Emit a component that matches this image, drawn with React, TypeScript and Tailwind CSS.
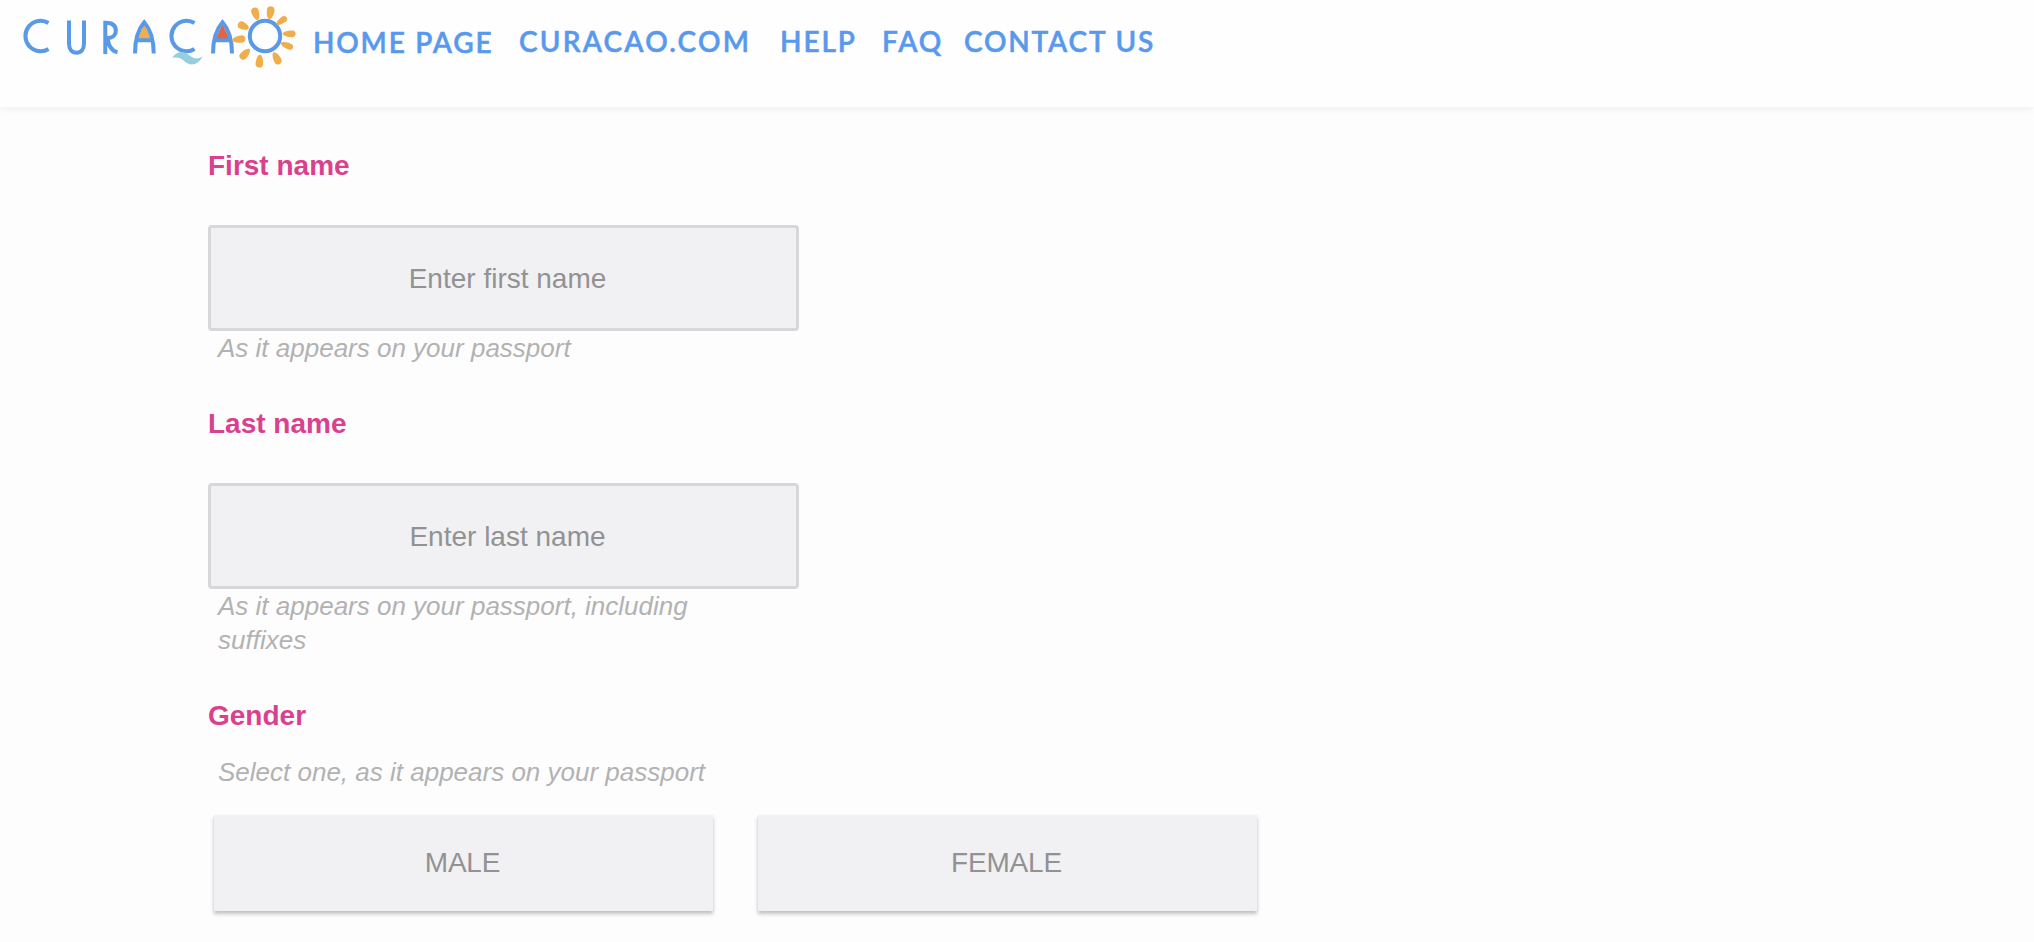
interface FieldProps {
  label: string;
  placeholder: string;
  hint: string;
}

const links = [
  { label: 'HOME PAGE', className: 'ml-[17px] mt-px w-[206px] tracking-[1.8px]' },
  { label: 'CURACAO.COM', className: 'w-[261px] tracking-[2.2px]' },
  { label: 'HELP', className: 'w-[102px] tracking-[1.9px]' },
  { label: 'FAQ', className: 'w-[82px] tracking-[2px]' },
  { label: 'CONTACT US', className: 'tracking-[1.8px]' },
];

const petals = [
  'translate(255.7 13.7) rotate(-18)',
  'translate(270.3 12.7) rotate(10)',
  'translate(281.7 20.7) rotate(54) scale(.8 .95)',
  'translate(289.3 33.8) rotate(90) scale(.9 1)',
  'translate(287 45.5) rotate(112) scale(.85 1)',
  'translate(276.7 58.3) rotate(152)',
  'translate(259.5 61.2) rotate(184)',
  'translate(245 54) rotate(222)',
  'translate(239 39.3) rotate(82)',
  'translate(243.3 26) rotate(-65) scale(1 .9)',
];

function Logo() {
  return (
    <svg className="w-[296px] h-[72px] shrink-0" viewBox="0 0 296 72" fill="none" stroke="#5899e8" strokeWidth="4">
      {/* C U R */}
      <path d="M48.5 23A15.200 15.200 0 1 0 48.5 49" />
      <path d="M69 20.500V43.500C69 49.500 72 52.700 76.500 52.700C81 52.700 84 49.500 84 43.500V20.500" />
      <path d="M105.300 54V22.800C112 22.800 115.800 25.500 115.800 30.500C115.800 35.500 112 38 107.500 38C108.500 46 111.500 51 117.500 52.200" />
      {/* first house */}
      <path d="M144.200 24L151 39.500H137.500Z" fill="#efad4c" stroke="none" />
      <path d="M135 53.500C135 38 138 29.500 144.200 22.300C150.500 29.500 153.700 38 153.700 53.500M136 40.300H152.500" />
      {/* C with wave */}
      <path d="M194.500 23A15.200 15.200 0 1 0 194.500 49" />
      <path d="M172 58C177 50.500 184 50.500 189 55C194 59.500 198 59 202.500 56.500C198 65.500 190 66.500 184 61C180 57.500 176 57 172 58Z" fill="#95cfdd" stroke="none" />
      {/* second house */}
      <path d="M222.500 24L229.500 39.500H215.500Z" fill="#e8623c" stroke="none" />
      <path d="M213 53.500C213 38 216.200 29.500 222.500 22.300C228.800 29.500 232 38 232 53.500M214.500 40.300H230.500" />
      {/* sun */}
      <circle cx="265" cy="36" r="15.200" />
      <g fill="#efad4c" stroke="none">
        {petals.map((transform) => (
          <path key={transform} transform={transform} d="M0 6.800C-2.800 6-4 0-3.700-3.500C-3.300-7.300 3.300-7.300 3.700-3.500C4 0 2.800 6 0 6.800Z" />
        ))}
      </g>
    </svg>
  );
}

function Field({ label, placeholder, hint }: FieldProps) {
  return (
    <div>
      <label className="block h-[75px] leading-8 font-bold text-[#d9418f]">{label}</label>
      <input
        className="block w-[591px] h-[106px] pl-2 pt-0.5 bg-[#f1f1f3] border-3 border-[#d6d7d8] rounded-[4px] text-center placeholder:text-[#929293] placeholder:opacity-100"
        placeholder={placeholder}
      />
      <p className="ml-[10px] w-[520px] leading-[34px] text-[26px] italic text-[#b2b2b3]">{hint}</p>
    </div>
  );
}

function GenderButton({ label }: { label: string }) {
  return (
    <button className="w-[499px] h-24 pr-0.5 bg-[#f1f1f3] text-[#929293] tracking-[-0.2px] shadow-[0_3px_4px_rgba(0,0,0,0.22),0_1px_3px_rgba(0,0,0,0.06)]">
      {label}
    </button>
  );
}

export default function App() {
  return (
    <div className="h-[942px] overflow-hidden bg-[#fdfdfd] text-[28px] font-['Liberation_Sans',Arial,sans-serif]">
      <header className="flex items-start h-[107px] bg-[#fefefe] shadow-[0_2px_8px_rgba(0,0,0,0.06)]">
        <Logo />
        <nav className="flex mt-6 leading-[34px] font-['Lato',sans-serif] font-semibold text-[#5899ee] whitespace-nowrap [-webkit-text-stroke:0.5px_#5899ee]">
          {links.map((link) => (
            <a key={link.label} className={link.className}>{link.label}</a>
          ))}
        </nav>
      </header>

      <main className="ml-52 pt-[43px]">
        <div className="flex flex-col gap-[43px]">
          <Field label="First name" placeholder="Enter first name" hint="As it appears on your passport" />
          <Field label="Last name" placeholder="Enter last name" hint="As it appears on your passport, including suffixes" />
        </div>

        {/* Gender */}
        <div className="mt-[43px]">
          <h2 className="leading-8 font-bold text-[#d9418f]">Gender</h2>
          <p className="mt-[23px] ml-[10px] leading-[34px] text-[26px] italic text-[#b2b2b3]">Select one, as it appears on your passport</p>
          <div className="flex gap-[45px] mt-[26px] ml-[6px]">
            <GenderButton label="MALE" />
            <GenderButton label="FEMALE" />
          </div>
        </div>
      </main>
    </div>
  );
}
